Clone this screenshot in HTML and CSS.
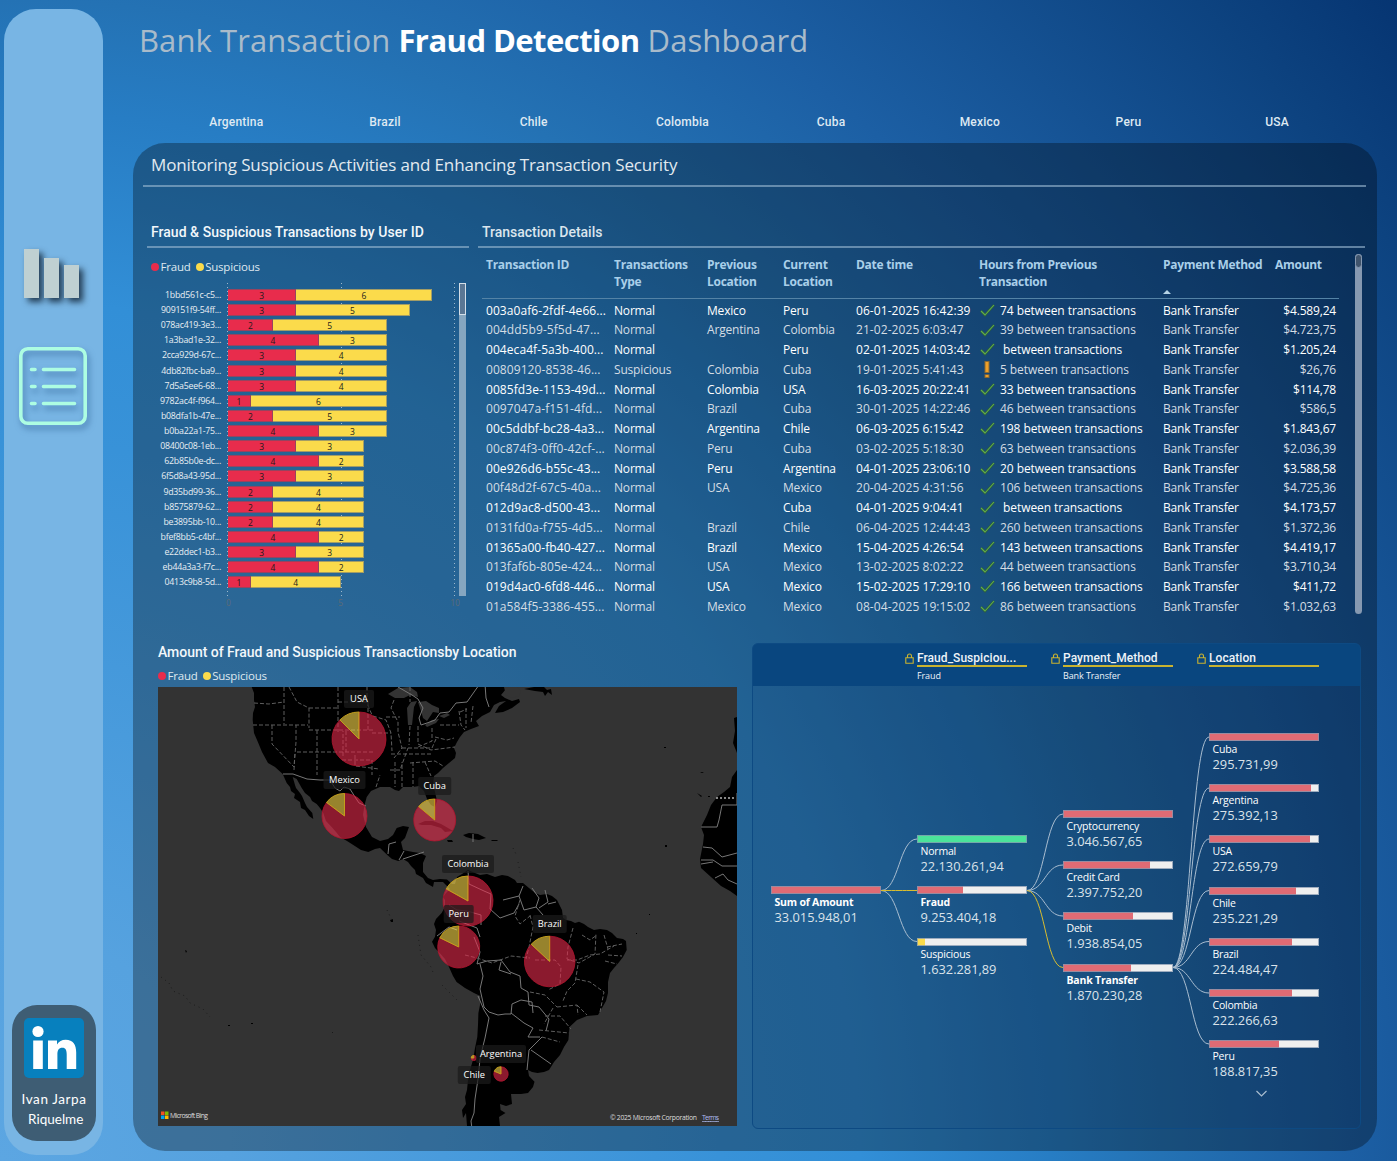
FILE: index.html
```html
<!DOCTYPE html>
<html lang="en">
<head>
<meta charset="utf-8">
<title>Bank Transaction Fraud Detection Dashboard</title>
<link rel="stylesheet" href="styles.css">
</head>
<body>
<aside class="sidebar">
  <nav class="nav">
    <svg class="nav-bars" width="70" height="64" viewBox="0 0 70 64" aria-label="Charts">
      <g fill="#bfd0d2"><path d="M6 5h15v49H6z"/><path d="M26 14h15v40H26z"/><path d="M46 21h15v33H46z"/></g>
    </svg>
    <svg class="nav-list" width="70" height="80" viewBox="0 0 70 80" fill="none" stroke="#adfde2" stroke-width="3.6" stroke-linecap="round" aria-label="Details">
      <rect x="2.8" y="2.8" width="64.4" height="74.4" rx="7"/>
      <path d="M13.500 23.500h3.500M25.500 23.500h31M13.500 40.500h3.500M25.500 40.500h31M13.500 57.500h3.500M25.500 57.500h31"/>
    </svg>
  </nav>
  <div class="author">
    <svg width="60" height="60" viewBox="0 0 60 60" aria-label="LinkedIn">
      <rect width="60" height="60" rx="5" fill="#0780be"/>
      <circle cx="14" cy="13.500" r="5.600" fill="#fff"/>
      <path fill="#fff" d="M9.200 22.500h9.600v28.500H9.200zM24 22.500h9v4c1.800-3 4.800-4.800 8.700-4.800 7.500 0 10.500 4.800 10.500 12.800V51h-9.500V36.500c0-4-1-6.700-4.300-6.700-3.700 0-5 2.600-5 6.700V51H24z"/>
    </svg>
    <p><span>Ivan Jarpa</span><br>&nbsp;Riquelme</p>
  </div>
</aside>
<main class="main">
  <h1>Bank Transaction <b>Fraud Detection</b> Dashboard</h1>
  <div class="tabs"><span>Argentina</span><span>Brazil</span><span>Chile</span><span>Colombia</span><span>Cuba</span><span>Mexico</span><span>Peru</span><span>USA</span></div>
  <section class="panel">
    <h2 class="subtitle">Monitoring Suspicious Activities and Enhancing Transaction Security</h2>
    <div class="top">
      <section class="users">
        <h3>Fraud &amp; Suspicious Transactions by User ID</h3>
        <div class="legend"><i class="dot red"></i>Fraud<i class="dot yellow"></i>Suspicious</div>
        <div class="chart">
          <div class="rows" id="rows"></div>
          <div class="scroll"><i></i></div>
        </div>
        <div class="axis"><span>0</span><span>5</span><span>10</span></div>
      </section>
      <section class="details">
        <h3>Transaction Details</h3>
        <div class="table-wrap">
          <table>
            <colgroup><col class="c1"><col class="c2"><col class="c3"><col class="c4"><col class="c5"><col class="c6"><col class="c7"><col class="c8"></colgroup>
            <thead><tr><th>Transaction ID</th><th>Transactions Type</th><th>Previous Location</th><th>Current Location</th><th>Date time</th><th>Hours from Previous Transaction</th><th class="sorted">Payment Method</th><th>Amount</th></tr></thead>
            <tbody id="tx"></tbody>
          </table>
          <div class="vscroll"><i></i></div>
        </div>
      </section>
    </div>
    <div class="bottom">
      <section class="geo">
        <h3>Amount of Fraud and Suspicious Transactionsby Location</h3>
        <div class="legend"><i class="dot red"></i>Fraud<i class="dot yellow"></i>Suspicious</div>
        <svg class="map" id="map" width="579" height="439" viewBox="158 687 579 439">
          <rect x="158" y="687" width="579" height="439" fill="#333"/>
          <g fill="#000">
            <path d="M251.700 687L254 693 254 700 255 707 253 713 252.700 720 254 733 258.300 743 262 752 268 763 275 767 282.700 774 286.700 783 290 787 291 791 295 794 294 798 300 802 301 808 305 810 309 816 313.300 819 312.300 813 307 807 305 803 302 796 300 793 296 788 295 785 292.700 777 296.700 779 301.700 788 305 793 310 797 312 801 316.700 804 320 808 323.300 813 326 821 331.700 827 336 832 340 837 347 841 353.300 845 361 850 368.300 852 375 849 380 848 387.300 855 392 859 398.300 861 403 859 408 862 411 866 415 870 416 874 423 878 426 883 433 887 434 882 443 882 450 889 446 893 443 897 445 900 445 907 441.600 913 436 919 434 924 436 930 435 936.700 432 941.700 435 948 439.700 953 445 959 449 967 453 976 456.600 982 465 988 474 993 480.300 996 480 1005 478.400 1013 478 1025 477.300 1037 475 1048 473 1060 470 1070 468 1080 467 1090 465 1097 466 1104 462 1110 463 1118 466 1113 467 1126 500 1126 499 1117 505.500 1113 500.600 1110 500 1104 506 1106 512 1104 511 1094 521 1094 528 1093 533 1087 534.500 1081.700 529 1076 528 1070 532 1072 537.500 1073 544 1072 549 1070 554 1062 560 1055 564 1047 568.400 1040 569.500 1027 577 1020 587 1016 598 1015 602 1008 606 1001 608 993 608 982 610 973 614 968 618.400 963 623 957 626.700 950 626 941 623 939 617 938 612 933 607 930 600 929 594 930 588 927 584 924 579 921.700 575 923 571 921 566 920 563 918 562 910 559 904 557 900 552 896 547 894 540 895 535 893 529 888 523 883 517 883 515 880 508 876 502 875 495 877 487 874 480 875 475 873 468 870 462 874 457 877 455 884 452 884 447 879.500 440 879 433 880 428 878 423 872 423 863 426 856 420 853 413 852 403 850 401 842 405 838 409 827 403 826 396.700 828 393 835 388 839 380 841 372 837 366 827 363 815 364.300 806 366.700 797 371 791 380 787 390 787 395 790 399 791 403 787 413 787 419 786 424 791 427 799 431 805 435 807 437 801 435 792 433 785 434 776 438 773 443 768 449 763 455 758 456 753 454 748 457 742 460 737 464 732 471 729 479 726 476 721 482 716 490 712 494 705 500 702 506 701 499 706 495 713 503 712 512 708 520 702 519 699 512 701 505 698 501 695 506 689 505 687z"/>
            <path d="M524 689l10-2h10l3 3 4-1 1 6-4-3-3 4-2-4-8-1zM418 824l7-3 8 0 8 3 7 4 5 3-8 1-4-4-10-3-9 0zM463 835l6-2 9 1 8 4-7 2-6-1-7-2zM491 840h6l1 1h-6zM447 840h5l1 2h-5z"/>
            <path d="M737 717l-3 1 1 13-2 12 4 10zM737 770l-5 7-2 10-6 5-7 5-6 8-4 10-6 12 3 8-1 9-3 15 1 9 10 9 10 9 9 5 7 5z"/>
            <path d="M185 950l2 1-1 2zM390 920l3-1v3h-2zM665 845h2v2h-2zM664 747h2v1h-2zM251 1023h2v1h-2zM332 1032h1v1zM700 772h4l-2 1zM697 793l5 3-1 1zM708 796h2v1h-2zM649 914h1v1h-1zM228 1025h2v1h-2zM636 933h1v1h-1z"/>
          </g>
          <g class="specks"><path d="M161 977l8 6 4 8 12 5 5 7 13 6 7 8"/><path d="M418 935l3 20 10 12 3 8M442 985l15 15M387 910l6 12M513 848l4 8M518 862l3 15"/></g>
          <g fill="#333">
            <path d="M388 694l10-6 12-1 7 5 1 5-8-2-6 3-9 0zM407 708l4-6 6-1-3 6-2 18h-4zM418 702l8-1 6 4 7 3 0 5-6-1-6 9-4-3-2-7zM425 725l7-5 7-1-3 4-9 4zM439 716l8-3 3 2-6 3zM504 687l2 8 6 3 7-2 2-5-4-4z"/>
          </g>
          <g class="border">
            <path d="M283 774l10 0 14 5 13 1h10l5 8 5 3 4-4 6 2 5 8 4 6 7 3M388 854l1-10 7-2M399 860l5-9M403 859l12-4 9-3M398 687l14 8 6 4 5 9-4 10 2 7 6-2 8-3 5-7 9-1 7-9 11-1 12-17 6-1 1 14 3 9"/>
            <path d="M468 871l1 13 15 7 7 3-1 15 10 9 14-5 5-9M503 900l16-4 4-10M519 896l5 14 12-3 3-9-7-10M539 908l9-6-3-12M548 904l8-2M536 907l7 8M449 905l8 5 10 1 14 4v10M437 936l12-9 8 3M459 921l18 7 3 9M474 937l6 15-3 12 10-3 14-1 9 12 10 4 1 12 7 4 1 13 10 2 10 12-3 12M480 964l3 12-3 13 4 18 5 5 9 3 7-1 6 0 1-10 9-4 11 2 1 11M478 996l6 14 5 8-4 20-3 12-2 9-2 20-3 20-1 14-3 8 2 16M511 1013l13 10 9 5-5 9 12 0M542 1037l-13 13-2 20M531 1050l20 14M501 962l-2 8 12 4M737 793l0 12h-15l-3 15-2 7h-16M703 847l9 1 10 9 15-4M701 860l12 0 9 6 15 0M715 878l8-4 5 6 9 4M701 864l12-2M473 834v8"/>
          </g>
          <g class="state">
            <path d="M254 703l15 1 15-2M284 687v37M253 725h55M272 725v19l22 23 2-25V725M294 770l1-18M289 687l8 15 12 6v20M309 708h29M338 687v45M309 730h64M317 730v45M297 752h76M338 702h30l0 29M346 731v21M342 760h30v15M343 756v-25M355 755v11l24 3M373 716l13 4 5 13 1 18M367 687v16l5 12M386 717h14M372 733h19M391 754h40M390 770h10l8-22M395 762v25M402 787v-25M413 762v25M425 762l6 14M394 700l-3 8 7 14 0 10 4 16-8 10M410 726l-1 19M418 726v18l13 6 24-3M432 728v13l-14 6M435 737l12 3 7-2M440 725h19M459 711l2 14 4 5M466 708v20M473 706l-2 17M402 748l30 0 4-9M410 763l25-2 8 5M410 687v15M460 712l7-3M376 787l4-12"/>
            <path d="M465 955l12 3 15 5 19-7 19 2M520 900l-5 16 5 8 10-8M530 915l3 12-4 20-3 12M535 960l20 0 6 7-1 17-12 6M573 928l-5 19-1 12 12 4 16-9 1-21M567 960l10 0 13-5 10-1 14-8M578 965l-3 18-8 8-4 10M576 979l14 3 14 10-4 20M530 992l15 3 12 12M557 1007l20-2 1 10M577 1005l10 10M545 1016l15 0 11 13M553 1008l-9 16M539 1030l30 3M542 1037l18 5M582 935l8 5 7-5M604 935l4 14M607 947l15-3M608 955l14 1M605 961l12 3"/>
          </g>
          <path d="M716 798h20" stroke="#888" stroke-width="2" stroke-dasharray="2 2"/>
        </svg>
      </section>
      <section class="tree" id="tree">
        <svg width="609" height="486" viewBox="752 643 609 486" id="links" fill="none" stroke="#a9bdd0"></svg>
      </section>
    </div>
  </section>
</main>
<script src="app.js"></script>
</body>
</html>
```
FILE: styles.css
```css
* { box-sizing: border-box; }
body {
  margin: 0; width: 1397px; height: 1161px; overflow: hidden;
  display: flex; gap: 30px; padding: 9px 20px 10px 4px;
  font-family: "Open Sans", "Noto Sans", sans-serif; color: #fff;
  background: radial-gradient(circle at 0 100%, #5ca6e2 0, #56a2df 230px, #3892d8 720px, #328fd7 860px, #277dc4 1050px, #2472b4 1161px, #1c5fa4 1350px, #0d4380 1665px, #063572 1816px);
}
h1, h2, h3, p { margin: 0; font-weight: 400; }
.sidebar { width: 99px; height: 1146px; border-radius: 32px; background: #78b5e4; display: flex; flex-direction: column; justify-content: space-between; align-items: center; padding: 235px 7px 14px 8px; flex: none; }
.nav { display: flex; flex-direction: column; align-items: center; gap: 38px; margin-left: -2px; }
.nav svg { overflow: visible; }
.nav-bars { filter: drop-shadow(4px 4px 3px rgba(20, 40, 60, .85)); margin-left: -1px; }
.nav-list { filter: drop-shadow(2px 4px 3px rgba(40, 90, 140, .6)); }
.author { width: 84px; height: 136px; border-radius: 25px; background: #3e5d74; display: flex; flex-direction: column; align-items: center; padding-top: 13px; }
.author p { font: 13.5px/20px Lato, sans-serif; text-align: center; margin-top: 11px; white-space: nowrap; }
.author span { letter-spacing: .6px; }
.main { width: 1244px; flex: none; }
h1 { font-size: 31px; line-height: 44px; color: #a9bbca; padding: 9px 0 0 6px; height: 96px; white-space: nowrap; letter-spacing: .08px; }
h1 b { color: #fff; letter-spacing: -.55px; }
.tabs { display: grid; grid-template-columns: repeat(8, 148.7px); margin-left: 29px; height: 38px; text-align: center; font: 500 12px/34px Roboto, sans-serif; color: #dfe9f2; letter-spacing: .2px; }
.panel { height: 1008px; border-radius: 32px; background: rgba(0, 0, 0, .31); }
.subtitle { height: 44px; margin: 0 11px 0 10px; padding-left: 8px; font-size: 17px; line-height: 43px; border-bottom: 2px solid rgba(155, 185, 210, .6); color: #e2eaf0; letter-spacing: -.15px; }
h3 { font: 500 14px/20px Roboto, sans-serif; color: #f2f7fb; letter-spacing: .03px; white-space: nowrap; }
.top { display: flex; gap: 9px; padding: 35px 0 0 14px; height: 454px; }
.users { width: 322px; }
.users h3, .details h3 { height: 26px; padding: 0 4px; border-bottom: 2px solid rgba(155, 185, 210, .6); }
.details h3 { color: #dbe5ed; letter-spacing: -.02px; }
.legend { display: flex; align-items: center; font-size: 11.5px; line-height: 16px; color: #dfe8ef; letter-spacing: -.2px; }
.dot { width: 8px; height: 8px; border-radius: 50%; margin-right: 1.5px; }
.red { background: #e82c4c; }
.yellow { background: #fbdb4b; margin-left: 5px; }
.users .legend { margin: 11px 0 0 4px; }
.chart { display: flex; height: 313px; margin-top: 8px; }
.rows { width: 312px; padding-top: 4.400px; background: repeating-linear-gradient(#9db8cc 0 1px, transparent 1px 4px) 80px 0 / 1px 100% no-repeat, repeating-linear-gradient(#9db8cc 0 1px, transparent 1px 4px) 194px 0 / 1px 100% no-repeat, repeating-linear-gradient(#9db8cc 0 1px, transparent 1px 4px) 307px 0 / 1px 100% no-repeat; }
.row { display: flex; align-items: center; height: 15.14px; font-size: 8.8px; letter-spacing: -.25px; color: #e8eef3; }
.row .id { width: 74px; text-align: right; margin-right: 7px; }
.row .bar { height: 12px; line-height: 11px; text-align: center; color: #231b1b; border: 1px solid #a87c5b; border-left-width: 0; font-size: 8.5px; }
.row .bar.f { background: #e82c4c; border-color: #97435f; }
.row .bar.s { background: #fbdb4b; border-color: #a39d66; }
.scroll { width: 7px; background: #86a6c0; }
.scroll i { display: block; height: 32px; border: 1px solid #d4dfe9; background: #5a7795; }
.axis { display: flex; justify-content: space-between; margin: 2px 9px 0 79px; font-size: 8.5px; line-height: 9px; color: #5c6b78; }
.details { width: 887px; }
.table-wrap { display: flex; justify-content: space-between; padding: 6px 3px 0 4px; height: 366px; }
table { width: 857px; border-collapse: collapse; table-layout: fixed; height: 10px; }
.c1 { width: 128px } .c2 { width: 93px } .c3 { width: 76px } .c4 { width: 73px } .c5 { width: 123px } .c6 { width: 184px } .c7 { width: 112px } .c8 { width: 68px }
th { text-align: left; vertical-align: top; font-size: 12px; line-height: 17px; font-weight: 700; color: #a9cfe9; padding: 2px 4px 0; height: 44px; border-bottom: 1px solid #5483a6; letter-spacing: -.28px; }
th:nth-child(7) { white-space: nowrap; }
.sorted::after { content: ""; display: block; margin-top: 17px; width: 0; height: 0; border: 4.5px solid transparent; border-top: 0; border-bottom-color: #b5d3e6; }
tbody td { font-size: 12px; height: 19.76px; line-height: 19px; padding: 0 0 0 4px; white-space: nowrap; letter-spacing: -.18px; }
tbody td:first-child, tbody td:nth-child(5) { letter-spacing: .07px; }
tbody td:nth-child(6) { letter-spacing: -.07px; }
tbody tr:first-child td { height: 22px; padding-top: 2px; }
tbody tr:nth-child(even) { color: #d5dde4; }
td:last-child { text-align: right; padding-right: 3px; }
td svg { vertical-align: middle; margin: -3px 4px 0 0; }
.vscroll { width: 7px; height: 360px; border-radius: 4px; background: #8699b1; }
.vscroll i { display: block; height: 14px; border-radius: 4px; border: 1px solid #8699b1; background: #40546c; }
.bottom { display: flex; gap: 15px; padding: 2px 0 0 25px; }
.geo { width: 579px; }
.geo h3 { height: 25px; line-height: 18px; letter-spacing: -.04px; }
.map { display: block; margin-top: 3px; overflow: hidden; }
.border { fill: none; stroke: #777; stroke-width: 1; }
.state { fill: none; stroke: #5e5e5e; stroke-width: 1; stroke-dasharray: 4 2; }
.specks { fill: none; stroke: #1c1c1c; stroke-width: 1; stroke-dasharray: 1 4; }
.tag rect { fill: #1b1b1b; fill-opacity: .72; }
.tag text { fill: #fff; font-size: 9.3px; text-anchor: middle; }
.tree { position: relative; width: 609px; height: 486px; border-radius: 6px; border: 1px solid #0d4a83; background: linear-gradient(#09467f 0 42px, transparent 42px), rgba(0, 40, 110, .06); }
.tree > svg { position: absolute; left: -1px; top: -1px; }
.head { position: absolute; width: 110px; font: 500 12px/19px Roboto, sans-serif; color: #eef3f8; }
.head b { display: block; font-weight: 500; border-bottom: 2px solid #c9b330; height: 18px; letter-spacing: .05px; }
.head small { display: block; font: 9px/14px "Open Sans", sans-serif; padding-top: 2px; letter-spacing: -.1px; }
.head svg { position: absolute; left: -12px; top: 4px; }
.node { position: absolute; width: 110px; }
.track { height: 8px; background: #efefef; outline: 1px solid rgba(130, 150, 175, .75); outline-offset: -1px; margin-bottom: 1px; }
.fill { height: 8px; background: #e06b74; }
.node span { display: block; font-size: 10.5px; line-height: 14px; padding-left: 3.5px; margin-top: 1px; letter-spacing: -.2px; }
.node em { display: block; font: 12.8px/14px "Open Sans", sans-serif; padding: 1px 0 0 3.5px; color: #dbe3ea; letter-spacing: 0; }
.node.on span { font-weight: 700; }
```
FILE: app.js
```js
const users = [["1bbd561c-c5...",3,6],["909151f9-54ff...",3,5],["078ac419-3e3...",2,5],["1a3bad1e-32...",4,3],["2cca929d-67c...",3,4],["4db82fbc-ba9...",3,4],["7d5a5ee6-68...",3,4],["9782ac4f-f964...",1,6],["b08dfa1b-47e...",2,5],["b0ba22a1-75...",4,3],["08400c08-1eb...",3,3],["62b85b0e-dc...",4,2],["6f5d8a43-95d...",3,3],["9d35bd99-36...",2,4],["b8575879-62...",2,4],["be3895bb-10...",2,4],["bfef8bb5-c4bf...",4,2],["e22ddec1-b3...",3,3],["eb44a3a3-f7c...",4,2],["0413c9b8-5d...",1,4]];
const UNIT = 22.7;
document.getElementById("rows").innerHTML = users.map(([id, f, s]) =>
  `<div class="row"><span class="id">${id}</span><div class="bar f" style="width:${f * UNIT}px">${f}</div><div class="bar s" style="width:${s * UNIT}px">${s}</div></div>`).join("");

const tx = `003a0af6-2fdf-4e66...|Normal|Mexico|Peru|06-01-2025 16:42:39|74|$4.589,24
004dd5b9-5f5d-47...|Normal|Argentina|Colombia|21-02-2025 6:03:47|39|$4.723,75
004eca4f-5a3b-400...|Normal||Peru|02-01-2025 14:03:42||$1.205,24
00809120-8538-46...|Suspicious|Colombia|Cuba|19-01-2025 5:41:43|5|$26,76
0085fd3e-1153-49d...|Normal|Colombia|USA|16-03-2025 20:22:41|33|$114,78
0097047a-f151-4fd...|Normal|Brazil|Cuba|30-01-2025 14:22:46|46|$586,5
00c5ddbf-bc28-4a3...|Normal|Argentina|Chile|06-03-2025 6:15:42|198|$1.843,67
00c874f3-0ff0-42cf-...|Normal|Peru|Cuba|03-02-2025 5:18:30|63|$2.036,39
00e926d6-b55c-43...|Normal|Peru|Argentina|04-01-2025 23:06:10|20|$3.588,58
00f48d2f-67c5-40a...|Normal|USA|Mexico|20-04-2025 4:31:56|106|$4.725,36
012d9ac8-d500-43...|Normal||Cuba|04-01-2025 9:04:41||$4.173,57
0131fd0a-f755-4d5...|Normal|Brazil|Chile|06-04-2025 12:44:43|260|$1.372,36
01365a00-fb40-427...|Normal|Brazil|Mexico|15-04-2025 4:26:54|143|$4.419,17
013faf6b-805e-424...|Normal|USA|Mexico|13-02-2025 8:02:22|44|$3.710,34
019d4ac0-6fd8-446...|Normal|USA|Mexico|15-02-2025 17:29:10|166|$411,72
01a584f5-3386-455...|Normal|Mexico|Mexico|08-04-2025 19:15:02|86|$1.032,63`;
const check = '<svg width="17" height="14" viewBox="0 0 17 14" fill="none"><path d="M2 8l4 4 9-10" stroke="#295c43" stroke-width="2.600"/><path d="M2 8l4 4 9-10" stroke="#62ad4a" stroke-width="1.100"/></svg>';
const warn = '<svg width="17" height="17" viewBox="0 0 17 17"><path d="M5.500 0h5v12h-5zM5.500 13.200h5v3.800h-5z" fill="#8a6a33"/><path d="M6.500 1h3v10h-3zM6.500 14h3v2h-3z" fill="#eda02a"/></svg>';
document.getElementById("tx").innerHTML = tx.split("\n").map(line => {
  const [id, type, prev, cur, date, hours, amount] = line.split("|");
  return `<tr><td>${id}</td><td>${type}</td><td>${prev}</td><td>${cur}</td><td>${date}</td><td>${type === "Normal" ? check : warn}${hours || "&nbsp;"}${hours ? " " : ""}between transactions</td><td>Bank Transfer</td><td>${amount}</td></tr>`;
}).join("");

// Pies: centre x, centre y, radius, suspicious share in degrees
const pies = [[359,739,27,45],[344.5,816,22.5,53],[434.7,820,21,50],[468,901,25,61],[458.7,947,21,64],[549.7,961.5,25.3,47],[473.800,1058,2.6,90],[501,1074,7.2,68]];
const tags = [["USA",359,699,30],["Mexico",344.5,780,42],["Cuba",434.7,786,33],["Colombia",468,864,52],["Peru",458.7,914,30],["Brazil",549.7,924,34],["Argentina",501,1054,50],["Chile",474.3,1075,33]];
let art = pies.map(([x, y, r, a]) => {
  const t = a * Math.PI / 180, ex = x - r * Math.sin(t), ey = y - r * Math.cos(t);
  return `<path d="M${x} ${y}V${y - r}A${r} ${r} 0 1 1 ${ex} ${ey}z" fill="#e82c4c" fill-opacity=".6" stroke="#b3142e" stroke-opacity=".8"/><path d="M${x} ${y}L${ex} ${ey}A${r} ${r} 0 0 1 ${x} ${y - r}z" fill="#fbdb4b" fill-opacity=".6" stroke="#c29e1b"/>`;
}).join("");
art += tags.map(([n, x, y, w]) => `<g class="tag"><rect x="${x - w / 2}" y="${y - 9}" width="${w}" height="18" rx="2"/><text x="${x}" y="${y + 3}">${n}</text></g>`).join("");
art += `<g><path fill="#f25022" d="M161 1111.500h3.500v3.500H161z"/><path fill="#7fba00" d="M165 1111.500h3.500v3.500H165z"/><path fill="#00a4ef" d="M161 1115.500h3.500v3.500H161z"/><path fill="#ffb900" d="M165 1115.500h3.500v3.500H165z"/></g>
<text x="170" y="1118" font-size="6.800" fill="#ddd" textLength="38">Microsoft Bing</text><text x="610" y="1120" font-size="6.800" fill="#ddd" textLength="87">© 2025 Microsoft Corporation</text><text x="702" y="1120" font-size="6.800" fill="#aebcf0" text-decoration="underline" textLength="17">Terms</text>`;
document.getElementById("map").insertAdjacentHTML("beforeend", art);

const OX = 753, OY = 644;
const tree = document.getElementById("tree");
const lock = '<svg width="9" height="11" viewBox="0 0 9 11" fill="none" stroke="#c9b330" stroke-width="1.100"><path d="M.8 4.800h7.400v5.400H.8zM2.500 4.800V3a2 2 0 0 1 4 0v1.800"/></svg>';
const heads = [["Fraud_Suspiciou...","Fraud",917],["Payment_Method","Bank Transfer",1063],["Location","",1209]];
// name, value, x, y, filled share, colour, selected
const nodes = [["Sum of Amount","33.015.948,01",771,886,1,"",1],
["Normal","22.130.261,94",917,835,1,"#4be39a"],["Fraud","9.253.404,18",917,886,.418,"",1],["Suspicious","1.632.281,89",917,937.500,.074,"#fbdb4b"],
["Cryptocurrency","3.046.567,65",1063,810,1],["Credit Card","2.397.752,20",1063,861,.787],["Debit","1.938.854,05",1063,912,.636],["Bank Transfer","1.870.230,28",1063,963.500,.614,"",1],
["Cuba","295.731,99",1209,733,1],["Argentina","275.392,13",1209,784,.931],["USA","272.659,79",1209,835,.922],["Chile","235.221,29",1209,886.500,.795],["Brazil","224.484,47",1209,937.500,.759],["Colombia","222.266,63",1209,989,.752],["Peru","188.817,35",1209,1040,.638]];
tree.insertAdjacentHTML("beforeend",
  heads.map(([t, s, x]) => `<div class="head" style="left:${x - OX}px;top:${649 - OY}px">${lock}<b>${t}</b><small>${s}</small></div>`).join("") +
  nodes.map(([n, v, x, y, p, c, on]) => `<div class="node${on ? " on" : ""}" style="left:${x - OX}px;top:${y - OY}px"><div class="track"><div class="fill" style="width:${p * 100}%;${c ? "background:" + c : ""}"></div></div><span>${n}</span><em>${v}</em></div>`).join(""));
const link = (x, y, tx, ty, on) => { const m = (x + tx) / 2; return `<path d="M${x} ${y}C${m} ${y} ${m} ${ty} ${tx} ${ty}"${on ? ' stroke="#d9bd2f"' : ""}/>`; };
document.getElementById("links").innerHTML =
  [839, 941.5].map(y => link(881, 890.5, 917, y)).join("") + link(881, 890.5, 917, 890.5, 1) +
  [814, 865, 916].map(y => link(1027, 890.5, 1063, y)).join("") + link(1027, 890.5, 1063, 967.5, 1) +
  [737, 788, 839, 890.5, 941.5, 993, 1044].map(y => link(1173, 967.5, 1209, y)).join("") +
  '<path d="M1256.500 1091l5 5 5-5" stroke-width="1.200"/>';
```
